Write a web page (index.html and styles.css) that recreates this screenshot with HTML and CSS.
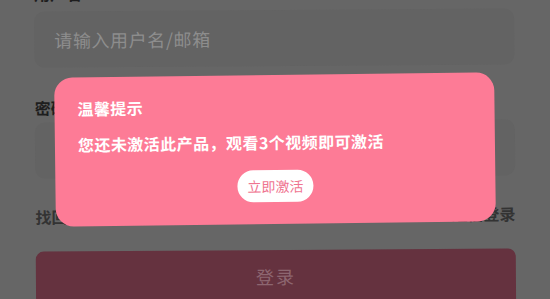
FILE: index.html
```html
<!DOCTYPE html>
<html lang="zh-CN">
<head>
<meta charset="utf-8">
<title>登录</title>
<link rel="stylesheet" href="styles.css">
</head>
<body>
<div class="page">
  <div class="label label-top">用户名</div>
  <div class="field"><span class="placeholder">请输入用户名/邮箱</span></div>
  <div class="label label-pwd">密码</div>
  <div class="field field-pwd"><span class="placeholder">请输入密码</span></div>
  <div class="links">
    <span>找回密码</span>
    <span>短信登录</span>
  </div>
  <div class="login-btn">登录</div>
</div>
<div class="modal">
  <div class="modal-title">温馨提示</div>
  <div class="modal-msg">您还未激活此产品，观看3个视频即可激活</div>
  <div class="modal-actions"><span class="activate-btn">立即激活</span></div>
</div>
</body>
</html>
```
FILE: styles.css
```css
html, body {
  margin: 0;
  padding: 0;
  background: #666666;
  overflow: hidden;
  height: 299px;
}
body {
  font-family: "Noto Sans CJK SC", "Noto Sans", sans-serif;
}
.page {
  padding: 0 35px 0 35px;
  transform: rotate(-0.4deg);
  transform-origin: 50% 50%;
}
.label {
  font-size: 16px;
  line-height: 22px;
  font-weight: 700;
  color: #1e1e1e;
}
.label-top {
  margin-top: -19px;
  height: 22px;
}
.field {
  margin-top: 7px;
  height: 56px;
  border-radius: 10px;
  background: #636363;
  display: flex;
  align-items: center;
  padding-left: 20px;
}
.placeholder {
  font-size: 18px;
  letter-spacing: 0.6px;
  color: #8d8d8d;
}
.label-pwd {
  margin-top: 29px;
}
.field-pwd {
  margin-top: 4px;
}
.links {
  margin-top: 27px;
  display: flex;
  justify-content: space-between;
  font-size: 16px;
  line-height: 22px;
  font-weight: 700;
  color: #333333;
}
.login-btn {
  margin-top: 24px;
  height: 58px;
  border-radius: 8px;
  background: #65323f;
  color: #8d6670;
  font-size: 18px;
  display: flex;
  justify-content: center;
  padding-top: 13px;
  box-sizing: border-box;
  letter-spacing: 2px;
}
.modal {
  position: absolute;
  left: 55px;
  top: 75px;
  width: 440px;
  height: 149px;
  box-sizing: border-box;
  border-radius: 18px;
  background: #fd7b96;
  padding: 20px 23px 0;
  transform: rotate(-0.7deg);
  color: #ffffff;
}
.modal-title {
  font-size: 16px;
  line-height: 22px;
  font-weight: 700;
  letter-spacing: 0.4px;
}
.modal-msg {
  margin-top: 14px;
  font-size: 16px;
  line-height: 22px;
  font-weight: 700;
  letter-spacing: 0.45px;
}
.modal-actions {
  margin-top: 17px;
  display: flex;
  justify-content: center;
}
.activate-btn {
  width: 76px;
  height: 32px;
  border-radius: 16px;
  background: #ffffff;
  color: #ef7490;
  font-size: 14px;
  display: flex;
  align-items: center;
  justify-content: center;
}
```
